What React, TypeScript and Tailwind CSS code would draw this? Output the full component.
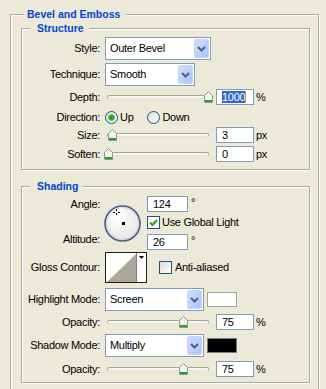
import React from 'react';

const ETCH = 'border border-[#aca899] shadow-[inset_1px_1px_0_#fff,1px_1px_0_#fff]';

function Label({ children }: { children: React.ReactNode }) {
  return <span className="w-[78px] shrink-0 text-right whitespace-nowrap">{children}</span>;
}

function Chevron() {
  return (
    <svg width="9" height="6" viewBox="0 0 9 6">
      <path d="M1 1 L4.5 4.5 L8 1" fill="none" stroke="#4d6185" strokeWidth="2" />
    </svg>
  );
}

function Select({ value, w }: { value: string; w: string }) {
  return (
    <div className={`${w} h-[23px] ml-[5px] shrink-0 border border-[#7f9db9] bg-white flex items-center p-[1px]`}>
      <span className="flex-1 pl-[3px] whitespace-nowrap">{value}</span>
      <span className="w-[15px] h-full rounded-[2px] border border-[#c3d3fd] bg-gradient-to-br from-[#d0defd] to-[#adc4f6] flex items-center justify-center">
        <Chevron />
      </span>
    </div>
  );
}

function TextBox({ value, selected = false, className = '' }: { value: string; selected?: boolean; className?: string }) {
  return (
    <div className={`w-[38px] h-[16px] shrink-0 border border-[#7f9db9] bg-white pl-[5px] flex items-center ${className}`}>
      {selected ? (
        <>
          <span className="bg-[#316ac5] text-white leading-[12px]">{value}</span>
          <span className="w-px h-[12px] bg-[#cf953a]" />
        </>
      ) : (
        <span className="leading-[12px]">{value}</span>
      )}
    </div>
  );
}

function Thumb({ left }: { left: number }) {
  return (
    <svg
      width="9"
      height="12"
      viewBox="0 0 9 12"
      className="absolute top-1/2 -translate-y-1/2"
      style={{ left }}
    >
      <path d="M0.5 4.5 L4.5 0.5 L8.5 4.5 V11.5 H0.5 Z" fill="#f5f5f0" stroke="#8c9a8c" />
      <rect x="1" y="9" width="7" height="2" fill="#21a121" />
    </svg>
  );
}

function Slider({ thumb }: { thumb: number }) {
  return (
    <div className="relative w-[108px] h-full ml-[5px] mr-[3px] shrink-0 flex items-center">
      <div className="ml-[2px] w-[102px] h-[4px] rounded-[2px] border border-[#a5a59a] border-b-[#e3e2da] bg-[#f6f5f0]" />
      <Thumb left={thumb} />
    </div>
  );
}

function Radio({ checked = false }: { checked?: boolean }) {
  return (
    <span className="w-[13px] h-[13px] rounded-full border border-[#1c5180] bg-gradient-to-br from-[#dcdcd5] to-white flex items-center justify-center">
      {checked && <span className="w-[5px] h-[5px] rounded-full bg-[#21a121] shadow-[0_0_0_1px_#6fd16f]" />}
    </span>
  );
}

function Checkbox({ checked = false }: { checked?: boolean }) {
  return (
    <span
      className={`w-[13px] h-[13px] shrink-0 border border-[#1c5180] flex items-center justify-center ${
        checked ? 'bg-white' : 'bg-gradient-to-br from-[#dcdcd5] to-white'
      }`}
    >
      {checked && (
        <svg width="9" height="9" viewBox="0 0 9 9">
          <path d="M1 4.5 L3.5 7 L8 2" fill="none" stroke="#21a121" strokeWidth="2" />
        </svg>
      )}
    </span>
  );
}

function Dial() {
  return (
    <svg width="37" height="37" viewBox="0 0 37 37" className="shrink-0">
      <defs>
        <radialGradient id="dialFill" cx="40%" cy="35%" r="70%">
          <stop offset="0%" stopColor="#ffffff" />
          <stop offset="100%" stopColor="#e4e4e0" />
        </radialGradient>
      </defs>
      <circle cx="18.5" cy="18.5" r="17.5" fill="url(#dialFill)" stroke="#4d5e86" strokeWidth="1.6" />
      <circle cx="18.5" cy="18.5" r="16" fill="none" stroke="#c9cfdc" strokeWidth="1" />
      <path d="M12.5 4 V6 M12.5 8 V10 M9 7.5 H11 M14 7.5 H16" stroke="#000" strokeWidth="1" />
      <rect x="18" y="17" width="3" height="3" fill="#000" />
    </svg>
  );
}

function Contour() {
  return (
    <div className="w-[42px] h-[31px] ml-[5px] shrink-0 border border-[#1e1e1e] bg-white flex">
      <svg width="30" height="29" viewBox="0 0 30 29" className="shrink-0">
        <path d="M1 29 L30 1 V29 Z" fill="#aca899" />
      </svg>
      <div className="flex-1 border-l border-[#7f7f7f] flex justify-center pt-[3px]">
        <svg width="5" height="3" viewBox="0 0 5 3">
          <path d="M0 0 H5 L2.5 3 Z" fill="#000" />
        </svg>
      </div>
    </div>
  );
}

function Deg() {
  return <span className="ml-[3px] self-start leading-[13px]">°</span>;
}

export default function App() {
  return (
    <div className="w-[326px] h-[389px] overflow-hidden bg-[#ece9d8] text-[11px] tracking-[-0.3px] text-black font-['Liberation_Sans',Arial,sans-serif] pt-[8px] pl-[10px]">
      <fieldset className={`w-[309px] ${ETCH} pl-[10px] pr-[8px] pt-[1px] pb-[20px]`}>
        <legend className="ml-[3px] pl-[3px] pr-[6px] bg-[#ece9d8] text-[#0046d5] font-bold text-[10.5px] tracking-normal leading-[13px]">
          Bevel and Emboss
        </legend>

        {/* Structure */}
        <fieldset className={`w-full ${ETCH} pt-[2px] pb-[7px]`}>
          <legend className="ml-[8px] pl-[7px] pr-[5px] bg-[#ece9d8] text-[#0046d5] font-bold text-[10.5px] tracking-normal leading-[13px]">
            Structure
          </legend>
          <div className="flex flex-col">
            <div className="flex items-center h-[23px]">
              <Label>Style:</Label>
              <Select value="Outer Bevel" w="w-[106px]" />
            </div>
            <div className="flex items-center h-[23px] mt-[3px]">
              <Label>Technique:</Label>
              <Select value="Smooth" w="w-[90px]" />
            </div>
            <div className="flex items-center h-[16px] mt-[3px]">
              <Label>Depth:</Label>
              <Slider thumb={99} />
              <TextBox value="1000" selected />
              <span className="ml-[2px]">%</span>
            </div>
            <div className="flex items-center h-[20px] mt-[2px]">
              <Label>Direction:</Label>
              <span className="ml-[5px] flex items-center gap-[2px]">
                <Radio checked />
                <span>Up</span>
              </span>
              <span className="ml-[14px] flex items-center gap-[2px]">
                <Radio />
                <span>Down</span>
              </span>
            </div>
            <div className="flex items-center h-[16px]">
              <Label>Size:</Label>
              <Slider thumb={3} />
              <TextBox value="3" />
              <span className="ml-[2px]">px</span>
            </div>
            <div className="flex items-center h-[16px] mt-[3px]">
              <Label>Soften:</Label>
              <Slider thumb={-1} />
              <TextBox value="0" />
              <span className="ml-[2px]">px</span>
            </div>
          </div>
        </fieldset>

        {/* Shading */}
        <fieldset className={`w-full mt-[10px] ${ETCH} pt-[3px] pb-[5px]`}>
          <legend className="ml-[8px] pl-[7px] pr-[5px] bg-[#ece9d8] text-[#0046d5] font-bold text-[10.5px] tracking-normal leading-[13px]">
            Shading
          </legend>
          <div className="flex flex-col">
            <div className="flex h-[52px]">
              <div className="w-[78px] flex flex-col justify-between text-right">
                <span className="leading-[16px]">Angle:</span>
                <span className="leading-[16px] mb-[1px]">Altitude:</span>
              </div>
              <div className="ml-[4px] pt-[9px]">
                <Dial />
              </div>
              <div className="ml-[6px] flex flex-col">
                <div className="flex">
                  <TextBox value="124" className="w-[41px]" />
                  <Deg />
                </div>
                <div className="flex items-center mt-[4px] h-[13px]">
                  <Checkbox checked />
                  <span className="ml-[2px] whitespace-nowrap">Use Global Light</span>
                </div>
                <div className="flex mt-[5px]">
                  <TextBox value="26" className="w-[41px]" />
                  <Deg />
                </div>
              </div>
            </div>

            <div className="flex items-center h-[31px] mt-[4px]">
              <Label>Gloss Contour:</Label>
              <Contour />
              <span className="ml-[12px]">
                <Checkbox />
              </span>
              <span className="ml-[3px]">Anti-aliased</span>
            </div>

            <div className="flex items-center h-[23px] mt-[5px]">
              <Label>Highlight Mode:</Label>
              <Select value="Screen" w="w-[99px]" />
              <span className="ml-[3px] w-[30px] h-[15px] border border-[#a3a3a3] bg-white" />
            </div>
            <div className="flex items-center h-[16px] mt-[3px]">
              <Label>Opacity:</Label>
              <Slider thumb={74} />
              <TextBox value="75" />
              <span className="ml-[2px]">%</span>
            </div>
            <div className="flex items-center h-[23px] mt-[4px]">
              <Label>Shadow Mode:</Label>
              <Select value="Multiply" w="w-[99px]" />
              <span className="ml-[3px] w-[30px] h-[15px] border border-[#7a7a7a] bg-black" />
            </div>
            <div className="flex items-center h-[16px] mt-[4px]">
              <Label>Opacity:</Label>
              <Slider thumb={74} />
              <TextBox value="75" />
              <span className="ml-[2px]">%</span>
            </div>
          </div>
        </fieldset>
      </fieldset>
    </div>
  );
}
